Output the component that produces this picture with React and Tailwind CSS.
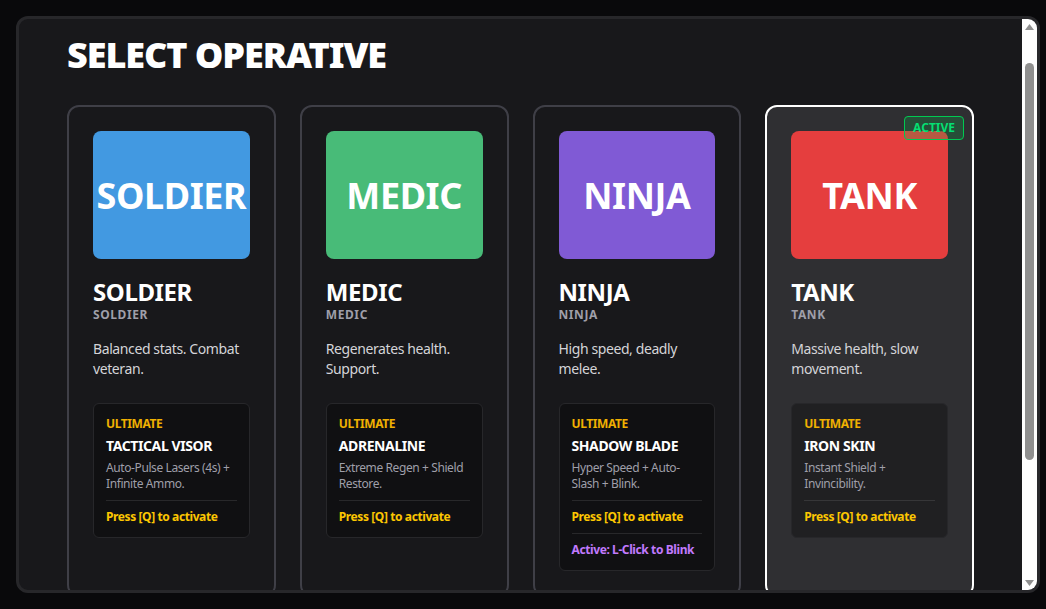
import { useEffect, useRef } from 'react';

const operatives = [
  {
    id: 'soldier',
    name: 'SOLDIER',
    color: 'bg-[#4299e1]',
    desc: 'Balanced stats. Combat veteran.',
    ultimate: 'TACTICAL VISOR',
    ultDesc: 'Auto-Pulse Lasers (4s) + Infinite Ammo.',
  },
  {
    id: 'medic',
    name: 'MEDIC',
    color: 'bg-[#48bb78]',
    desc: 'Regenerates health. Support.',
    ultimate: 'ADRENALINE',
    ultDesc: 'Extreme Regen + Shield Restore.',
  },
  {
    id: 'ninja',
    name: 'NINJA',
    color: 'bg-[#805ad5]',
    desc: 'High speed, deadly melee.',
    ultimate: 'SHADOW BLADE',
    ultDesc: 'Hyper Speed + Auto-Slash + Blink.',
    extra: 'Active: L-Click to Blink',
  },
  {
    id: 'tank',
    name: 'TANK',
    color: 'bg-[#e53e3e]',
    desc: 'Massive health, slow movement.',
    ultimate: 'IRON SKIN',
    ultDesc: 'Instant Shield + Invincibility.',
  },
];

const OperativeCard = ({ op, active }) => (
  <div
    className={`relative flex flex-col rounded-xl border-2 p-6 ${
      active ? 'border-white bg-[#2f2f32]' : 'border-zinc-700 bg-[#18181b]'
    }`}
  >
    {active && (
      <span className="absolute right-2 top-[9px] z-10 rounded border border-green-500 bg-green-500/20 px-2 py-[3px] text-xs font-bold leading-4 tracking-normal text-green-400">
        ACTIVE
      </span>
    )}
    <div className={`flex h-32 items-center justify-center rounded-lg pt-0.5 ${op.color}`}>
      <span className="text-4xl font-bold text-white">{op.name}</span>
    </div>
    <h3 className="mt-[17px] text-2xl font-bold leading-8 text-white">{op.name}</h3>
    <p className="-mt-px text-xs font-bold uppercase tracking-wider text-zinc-400">{op.id}</p>
    <p className="mt-4 text-sm leading-5 text-zinc-300">{op.desc}</p>
    <div className="mt-6 rounded-md border border-zinc-800 bg-black/30 p-3">
      <p className="text-xs font-bold leading-4 text-yellow-500">ULTIMATE</p>
      <p className="mt-1 text-sm font-bold leading-5 text-white">{op.ultimate}</p>
      <p className="mt-1 text-xs leading-4 text-zinc-400">{op.ultDesc}</p>
      <p className="mt-2 border-t border-white/10 pt-2 text-xs font-bold leading-4 text-yellow-400">
        Press [Q] to activate
      </p>
      {op.extra && (
        <p className="mt-2 border-t border-white/10 pt-2 text-xs font-bold leading-4 text-purple-400">
          {op.extra}
        </p>
      )}
    </div>
  </div>
);

// classic scrollbar look, drawn beside the scroll area
const Scrollbar = () => (
  <div className="flex w-[15px] shrink-0 flex-col bg-[#fdfdfd]">
    <div className="flex h-[15px] items-center justify-center">
      <svg width="9" height="6" viewBox="0 0 9 6">
        <path d="M4.5 0L9 6H0z" fill="#8f8f8f" />
      </svg>
    </div>
    <div className="flex flex-1 justify-center">
      <div className="mt-[29px] h-[397px] w-[9px] rounded-full bg-[#8f8f8f]" />
    </div>
    <div className="flex h-[15px] items-center justify-center">
      <svg width="9" height="6" viewBox="0 0 9 6">
        <path d="M0 0H9L4.5 6z" fill="#8f8f8f" />
      </svg>
    </div>
  </div>
);

export default function App() {
  const scrollRef = useRef(null);

  useEffect(() => {
    if (scrollRef.current) scrollRef.current.scrollTop = 32;
  }, []);

  return (
    <div
      className="h-[609px] w-full overflow-hidden bg-[#09090b] pl-4 pt-4 tracking-tight"
      style={{ fontFamily: '"Noto Sans", "Open Sans", sans-serif' }}
    >
      <div className="flex h-[577px] w-[1024px] overflow-hidden rounded-xl border-[3px] border-zinc-800 bg-[#18181b]">
        <div
          ref={scrollRef}
          className="h-full flex-1 overflow-y-auto px-12 pb-[164px] pt-12 [scrollbar-width:none]"
        >
          <h1 className="mb-[30px] text-4xl font-black leading-10 tracking-[-0.03em] text-white">SELECT OPERATIVE</h1>
          <div className="grid grid-cols-4 gap-6">
            {operatives.map((op) => (
              <OperativeCard key={op.id} op={op} active={op.id === 'tank'} />
            ))}
          </div>
        </div>
        <Scrollbar />
      </div>
    </div>
  );
}
